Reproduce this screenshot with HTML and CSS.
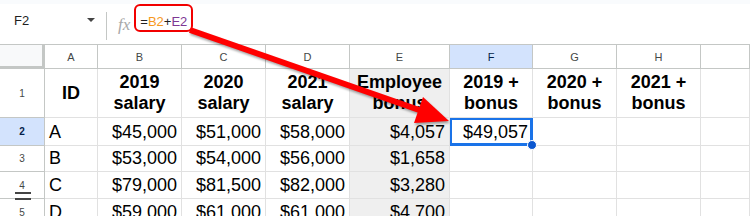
FILE: index.html
```html
<!DOCTYPE html>
<html lang="en">
<head>
  <meta charset="UTF-8">
  <title>Sheet - bonus formula</title>
  <link rel="stylesheet" href="styles.css">
</head>
<body>
  <div class="topstrip"></div>

  <div class="formula-bar">
    <div class="name-box">F2<span class="caret"></span></div>
    <div class="sep"></div>
    <div class="fx">fx</div>
    <div class="formula">=<span class="ref-b">B2</span>+<span class="ref-e">E2</span></div>
  </div>

  <div class="sheet">
    <div class="corner"></div>
    <div class="colhead">A</div>
    <div class="colhead">B</div>
    <div class="colhead">C</div>
    <div class="colhead">D</div>
    <div class="colhead">E</div>
    <div class="colhead sel">F</div>
    <div class="colhead">G</div>
    <div class="colhead">H</div>
    <div class="colhead"></div>

    <div class="rowhead">1</div>
    <div class="cell head">ID</div>
    <div class="cell head">2019<br>salary</div>
    <div class="cell head">2020<br>salary</div>
    <div class="cell head">2021<br>salary</div>
    <div class="cell head shade">Employee<br>bonus</div>
    <div class="cell head">2019 +<br>bonus</div>
    <div class="cell head">2020 +<br>bonus</div>
    <div class="cell head">2021 +<br>bonus</div>
    <div class="cell"></div>

    <div class="rowhead sel">2</div>
    <div class="cell">A</div>
    <div class="cell num">$45,000</div>
    <div class="cell num">$51,000</div>
    <div class="cell num">$58,000</div>
    <div class="cell num shade">$4,057</div>
    <div class="cell num active">$49,057<span class="handle"></span></div>
    <div class="cell"></div>
    <div class="cell"></div>
    <div class="cell"></div>

    <div class="rowhead">3</div>
    <div class="cell">B</div>
    <div class="cell num">$53,000</div>
    <div class="cell num">$54,000</div>
    <div class="cell num">$56,000</div>
    <div class="cell num shade">$1,658</div>
    <div class="cell"></div>
    <div class="cell"></div>
    <div class="cell"></div>
    <div class="cell"></div>

    <div class="rowhead">4</div>
    <div class="cell">C</div>
    <div class="cell num">$79,000</div>
    <div class="cell num">$81,500</div>
    <div class="cell num">$82,000</div>
    <div class="cell num shade">$3,280</div>
    <div class="cell"></div>
    <div class="cell"></div>
    <div class="cell"></div>
    <div class="cell"></div>

    <div class="rowhead">5</div>
    <div class="cell">D</div>
    <div class="cell num">$59,000</div>
    <div class="cell num">$61,000</div>
    <div class="cell num">$61,000</div>
    <div class="cell num shade">$4,700</div>
    <div class="cell"></div>
    <div class="cell"></div>
    <div class="cell"></div>
    <div class="cell"></div>
  </div>

  <div class="freeze-handle"></div>

  <svg class="annotation" width="750" height="216" viewBox="0 0 750 216">
    <rect x="135" y="5" width="57" height="26" rx="5" fill="none" stroke="#f20000" stroke-width="2"/>
    <g class="arrow">
      <line x1="190" y1="30" x2="422" y2="111" stroke="#ff0000" stroke-width="6"/>
      <polygon points="449,121 414,123 423,97" fill="#ff0000"/>
    </g>
  </svg>
</body>
</html>
```

FILE: styles.css
```css
body { margin: 0; font-family: "Liberation Sans", Arial, sans-serif; color: #000; background: #fff; width: 750px; height: 216px; overflow: hidden; position: relative; }

.topstrip { height: 4px; background: #f9fbfd; }

.formula-bar { display: flex; align-items: flex-start; height: 40px; border-bottom: 1px solid #c4c7c5; }
.name-box { width: 93px; padding-left: 14px; margin-top: 9px; font-size: 13px; line-height: 15px; color: #1f1f1f; position: relative; box-sizing: border-box; }
.caret { position: absolute; left: 87px; top: 5px; width: 0; height: 0; border-left: 4px solid transparent; border-right: 4px solid transparent; border-top: 4px solid #444; }
.sep { width: 1px; height: 28px; margin-top: 8px; margin-left: 13px; background: #c4c7c5; }
.fx { margin-left: 11px; margin-top: 12px; font-family: "Liberation Serif", serif; font-style: italic; font-size: 17px; line-height: 17px; color: #a8a8a8; }
.formula { margin-left: 10px; margin-top: 10px; font-size: 13px; line-height: 15px; color: #1f1f1f; }
.ref-b { color: #f7981d; }
.ref-e { color: #7e3794; }

.sheet { display: grid; grid-template-columns: 45px 53px 84px 84px 84px 100px 83px 84px 84px 49px; grid-template-rows: 24px 49px 28px 26px 27px 27px; }
.sheet > div { box-sizing: border-box; }

.corner { background: #f8f9fa; border-right: 3px solid #c4c7c5; border-bottom: 3px solid #c4c7c5; }
.colhead { display: flex; align-items: center; justify-content: center; font-size: 11px; color: #444746; border-right: 1px solid #c4c7c5; border-bottom: 1px solid #c4c7c5; }
.colhead.sel { background: #d3e3fd; color: #0b57d0; color: #041e49; }

.rowhead { display: flex; align-items: center; justify-content: center; font-size: 10px; color: #444746; border-right: 1px solid #c4c7c5; border-bottom: 1px solid #c4c7c5; }
.rowhead.sel { background: #d3e3fd; color: #041e49; font-weight: bold; }

.cell { display: flex; align-items: flex-end; padding: 0 4px 2px; font-size: 18px; line-height: 22px; border-right: 1px solid #e1e1e1; border-bottom: 1px solid #e1e1e1; white-space: nowrap; position: relative; }
.cell.head { align-items: center; justify-content: center; text-align: center; font-weight: bold; line-height: 21px; padding: 0 2px; }
.cell.num { justify-content: flex-end; }
.cell.shade { background: #efefef; }

.cell.active { box-shadow: inset 0 0 0 2px #1a73e8; border-color: #1a73e8; }
.handle { position: absolute; right: -5px; bottom: -5px; width: 8px; height: 8px; border-radius: 50%; background: #0b57d0; border: 1px solid #fff; z-index: 2; }

.freeze-handle { position: absolute; left: 15px; top: 193px; width: 16px; height: 2px; border-top: 2px solid #444; border-bottom: 2px solid #444; height: 4px; box-sizing: content-box; }
.freeze-handle { height: 4px; top: 192px; }

.annotation { position: absolute; left: 0; top: 0; pointer-events: none; }
.arrow { filter: drop-shadow(1px 2px 1px rgba(0, 0, 0, 0.35)); }
```
